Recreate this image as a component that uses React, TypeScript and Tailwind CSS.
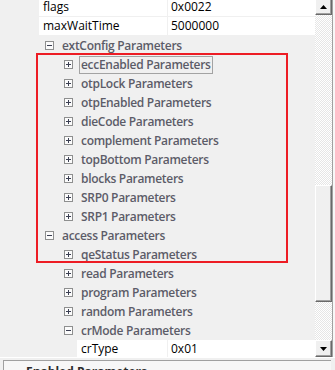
import React from "react";

type Row =
  | { kind: "value"; indent: number; name: string; value: string }
  | { kind: "group"; level: 1 | 2; open: boolean; name: string; focus?: boolean };

const rows: Row[] = [
  { kind: "value", indent: 39, name: "flags", value: "0x0022" },
  { kind: "value", indent: 39, name: "maxWaitTime", value: "5000000" },
  { kind: "group", level: 1, open: true, name: "extConfig Parameters" },
  { kind: "group", level: 2, open: false, name: "eccEnabled Parameters", focus: true },
  { kind: "group", level: 2, open: false, name: "otpLock Parameters" },
  { kind: "group", level: 2, open: false, name: "otpEnabled Parameters" },
  { kind: "group", level: 2, open: false, name: "dieCode Parameters" },
  { kind: "group", level: 2, open: false, name: "complement Parameters" },
  { kind: "group", level: 2, open: false, name: "topBottom Parameters" },
  { kind: "group", level: 2, open: false, name: "blocks Parameters" },
  { kind: "group", level: 2, open: false, name: "SRP0 Parameters" },
  { kind: "group", level: 2, open: false, name: "SRP1 Parameters" },
  { kind: "group", level: 1, open: true, name: "access Parameters" },
  { kind: "group", level: 2, open: false, name: "qeStatus Parameters" },
  { kind: "group", level: 2, open: false, name: "read Parameters" },
  { kind: "group", level: 2, open: false, name: "program Parameters" },
  { kind: "group", level: 2, open: false, name: "random Parameters" },
  { kind: "group", level: 2, open: true, name: "crMode Parameters" },
  { kind: "value", indent: 77, name: "crType", value: "0x01" },
];

const ToggleBox = ({ open }: { open: boolean }) => (
  <svg width="9" height="9" viewBox="0 0 9 9" className="shrink-0">
    <rect x="0.5" y="0.5" width="8" height="8" fill="#fbfbfb" stroke="#8e8f8f" />
    <path d="M2 4.5h5" stroke="#3b3f52" />
    {!open && <path d="M4.5 2v5" stroke="#3b3f52" />}
  </svg>
);

const Arrow = ({ up }: { up: boolean }) => (
  <svg width="7" height="4" viewBox="0 0 7 4">
    <path d={up ? "M3.5 0L7 4H0z" : "M0 0h7L3.5 4z"} fill="#000" />
  </svg>
);

const ScrollButton = ({ up }: { up: boolean }) => (
  <div className="h-[17px] w-[17px] shrink-0 flex items-center justify-center bg-[#f0f0f0] border-t border-l border-white border-r border-b border-r-[#696969] border-b-[#696969] shadow-[inset_-1px_-1px_#a0a0a0]">
    <Arrow up={up} />
  </div>
);

const checker =
  "bg-[repeating-conic-gradient(#e6e6e6_0_25%,#ffffff_0_50%)] bg-[length:2px_2px]";

export default function App() {
  return (
    <div className="relative w-[335px] h-[370px] overflow-hidden bg-[#f0f0f0] font-['Open_Sans',sans-serif] text-[12px]">
      <div className="flex h-[359px] -mt-[2px]">
        <div className="w-[315px] flex flex-col overflow-hidden">
          {rows.map((r, i) =>
            r.kind === "value" ? (
              <div key={i} className="flex h-[19px] shrink-0 pb-px" style={{ paddingLeft: r.indent }}>
                <div className="flex-1 bg-white pl-[4px] leading-[18px] text-black">{r.name}</div>
                <div className="w-[147px] ml-px bg-white pl-[3px] leading-[18px] text-black">{r.value}</div>
              </div>
            ) : (
              <div
                key={i}
                className={`flex items-center h-[19px] shrink-0 ${r.level === 1 ? "pl-[45px]" : "pl-[64px]"}`}
              >
                <ToggleBox open={r.open} />
                <span
                  className={`font-semibold text-[#5c5c68] tracking-[-0.3px] whitespace-nowrap leading-[16px] ${
                    r.focus ? "ml-[6px] px-px border border-[#a3a3a3]" : "ml-[8px]"
                  }`}
                >
                  {r.name}
                </span>
              </div>
            )
          )}
        </div>
        <div className="w-[17px] flex flex-col">
          <ScrollButton up />
          <div className={`h-[170px] shrink-0 ${checker}`} />
          <div className="h-[117px] shrink-0 bg-[#f0f0f0] border-t border-l border-white border-r border-b border-r-[#696969] border-b-[#696969] shadow-[inset_-1px_-1px_#a0a0a0]" />
          <div className={`flex-1 ${checker}`} />
          <ScrollButton up={false} />
        </div>
        <div className="w-px bg-[#a0a0a0]" />
        <div className="w-[2px] bg-[#f7f7f7]" />
      </div>
      <div className="h-px bg-white" />
      <div className="mt-[2px] ml-[3px] mr-[4px] h-[20px] border-t border-l border-[#a0a0a0] bg-[#f7f7f7] pl-[22px] pt-[2px]">
        <span className="font-bold text-[#2b2b2b] leading-[16px]">Enabled Parameters</span>
      </div>
      <div className="absolute left-[36px] top-[53px] w-[252px] h-[210px] border-2 border-[#ed1c24]" />
    </div>
  );
}
